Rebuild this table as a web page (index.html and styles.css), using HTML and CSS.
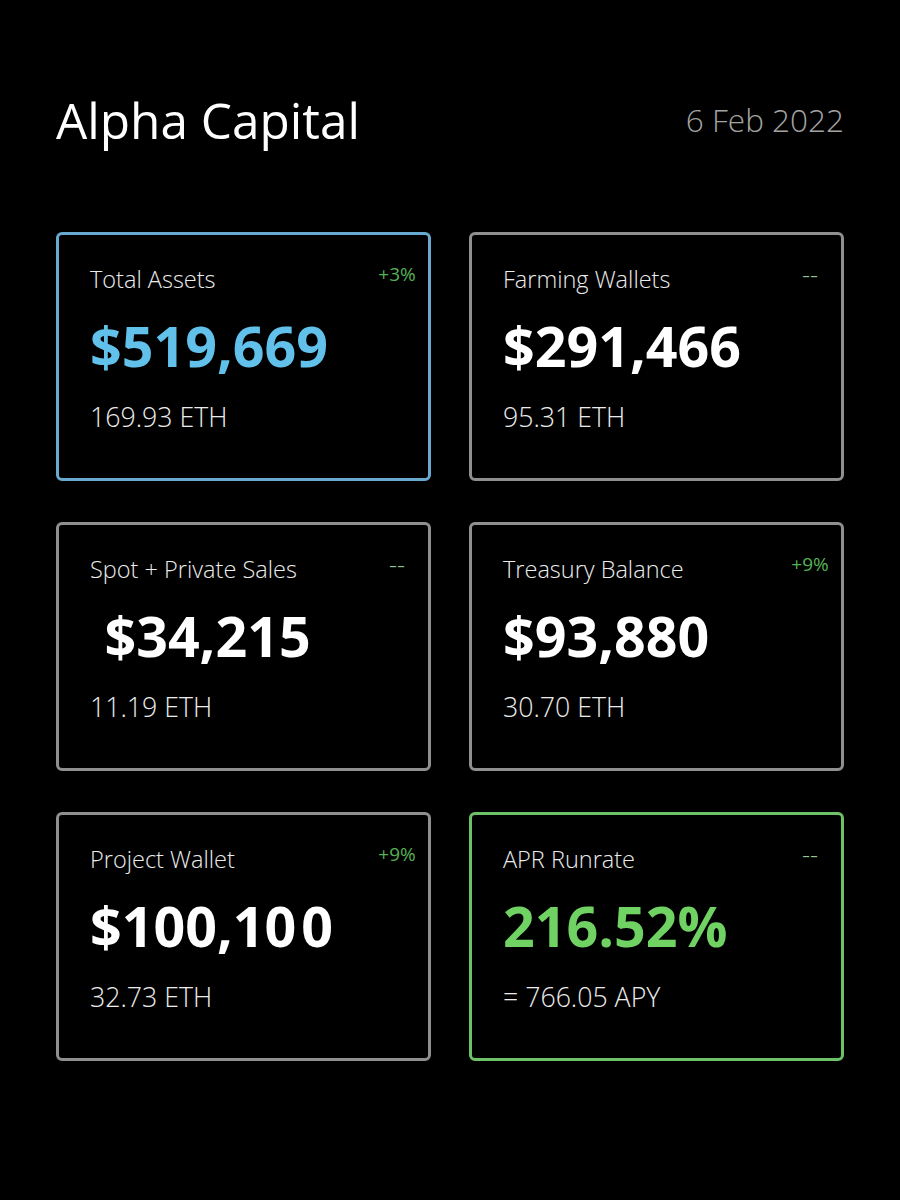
FILE: index.html
```html
<!DOCTYPE html>
<html lang="en">
<head>
<meta charset="utf-8">
<title>Alpha Capital</title>
<link rel="stylesheet" href="styles.css">
</head>
<body>
<div class="page">
  <header class="header">
    <h1 class="title">Alpha Capital</h1>
    <div class="date">6 Feb 2022</div>
  </header>
  <main class="grid">
    <section class="card card-blue">
      <div class="card-head"><div class="label">Total Assets</div><div class="badge">+3%</div></div>
      <div class="value value-blue">$519,669</div>
      <div class="sub">169.93 ETH</div>
    </section>
    <section class="card">
      <div class="card-head"><div class="label">Farming Wallets</div><div class="badge badge-flat">--</div></div>
      <div class="value">$291,466</div>
      <div class="sub">95.31 ETH</div>
    </section>
    <section class="card">
      <div class="card-head"><div class="label">Spot + Private Sales</div><div class="badge badge-flat">--</div></div>
      <div class="value">&nbsp;$34,215</div>
      <div class="sub">11.19 ETH</div>
    </section>
    <section class="card">
      <div class="card-head"><div class="label">Treasury Balance</div><div class="badge">+9%</div></div>
      <div class="value">$93,880</div>
      <div class="sub">30.70 ETH</div>
    </section>
    <section class="card">
      <div class="card-head"><div class="label">Project Wallet</div><div class="badge">+9%</div></div>
      <div class="value">$100,10<span class="spaced">0</span></div>
      <div class="sub">32.73 ETH</div>
    </section>
    <section class="card card-green">
      <div class="card-head"><div class="label">APR Runrate</div><div class="badge badge-flat">--</div></div>
      <div class="value value-green">216.52%</div>
      <div class="sub">= 766.05 APY</div>
    </section>
  </main>
</div>
</body>
</html>
```

FILE: styles.css
```css
html, body {
  margin: 0;
  padding: 0;
  background: #000;
}

body {
  font-family: "Open Sans", "Noto Sans", sans-serif;
  color: #fff;
}

.page {
  width: 788px;
  margin: 0 auto;
  padding-top: 89px;
}

.header {
  display: flex;
  justify-content: space-between;
  align-items: flex-start;
}

.title {
  margin: 0;
  font-size: 49.5px;
  line-height: 62px;
  font-weight: 400;
  color: #fff;
}

.date {
  margin-top: 11px;
  font-size: 31.5px;
  line-height: 40px;
  font-weight: 300;
  color: #a3a3a3;
}

.grid {
  margin-top: 81px;
  display: grid;
  grid-template-columns: 375px 375px;
  grid-auto-rows: 249px;
  column-gap: 38px;
  row-gap: 41px;
}

.card {
  box-sizing: border-box;
  border: 3px solid #8f8f8f;
  border-radius: 6px;
  padding: 28.5px 10px 0 31px;
  background: #000;
}

.card-blue {
  border-color: #6aa9cf;
}

.card-green {
  border-color: #6cc266;
}

.card-head {
  display: flex;
  justify-content: space-between;
  align-items: flex-start;
}

.label {
  font-size: 23.5px;
  line-height: 31px;
  font-weight: 300;
  color: #ececec;
}

.badge {
  width: 42px;
  text-align: center;
  font-size: 19px;
  line-height: 20px;
  font-weight: 400;
  color: #55b155;
}

.badge-flat {
  font-size: 25px;
  font-weight: 300;
  letter-spacing: 0;
  color: #94c394;
}

.value {
  margin-top: 20px;
  font-size: 55.5px;
  line-height: 62px;
  font-weight: 700;
  color: #fff;
  white-space: nowrap;
}

.value-blue {
  color: #62c1ea;
}

.value-green {
  color: #6fd263;
}

.spaced {
  margin-left: 5px;
}

.sub {
  margin-top: 22px;
  font-size: 26.7px;
  line-height: 35px;
  font-weight: 300;
  color: #ececec;
}
```
